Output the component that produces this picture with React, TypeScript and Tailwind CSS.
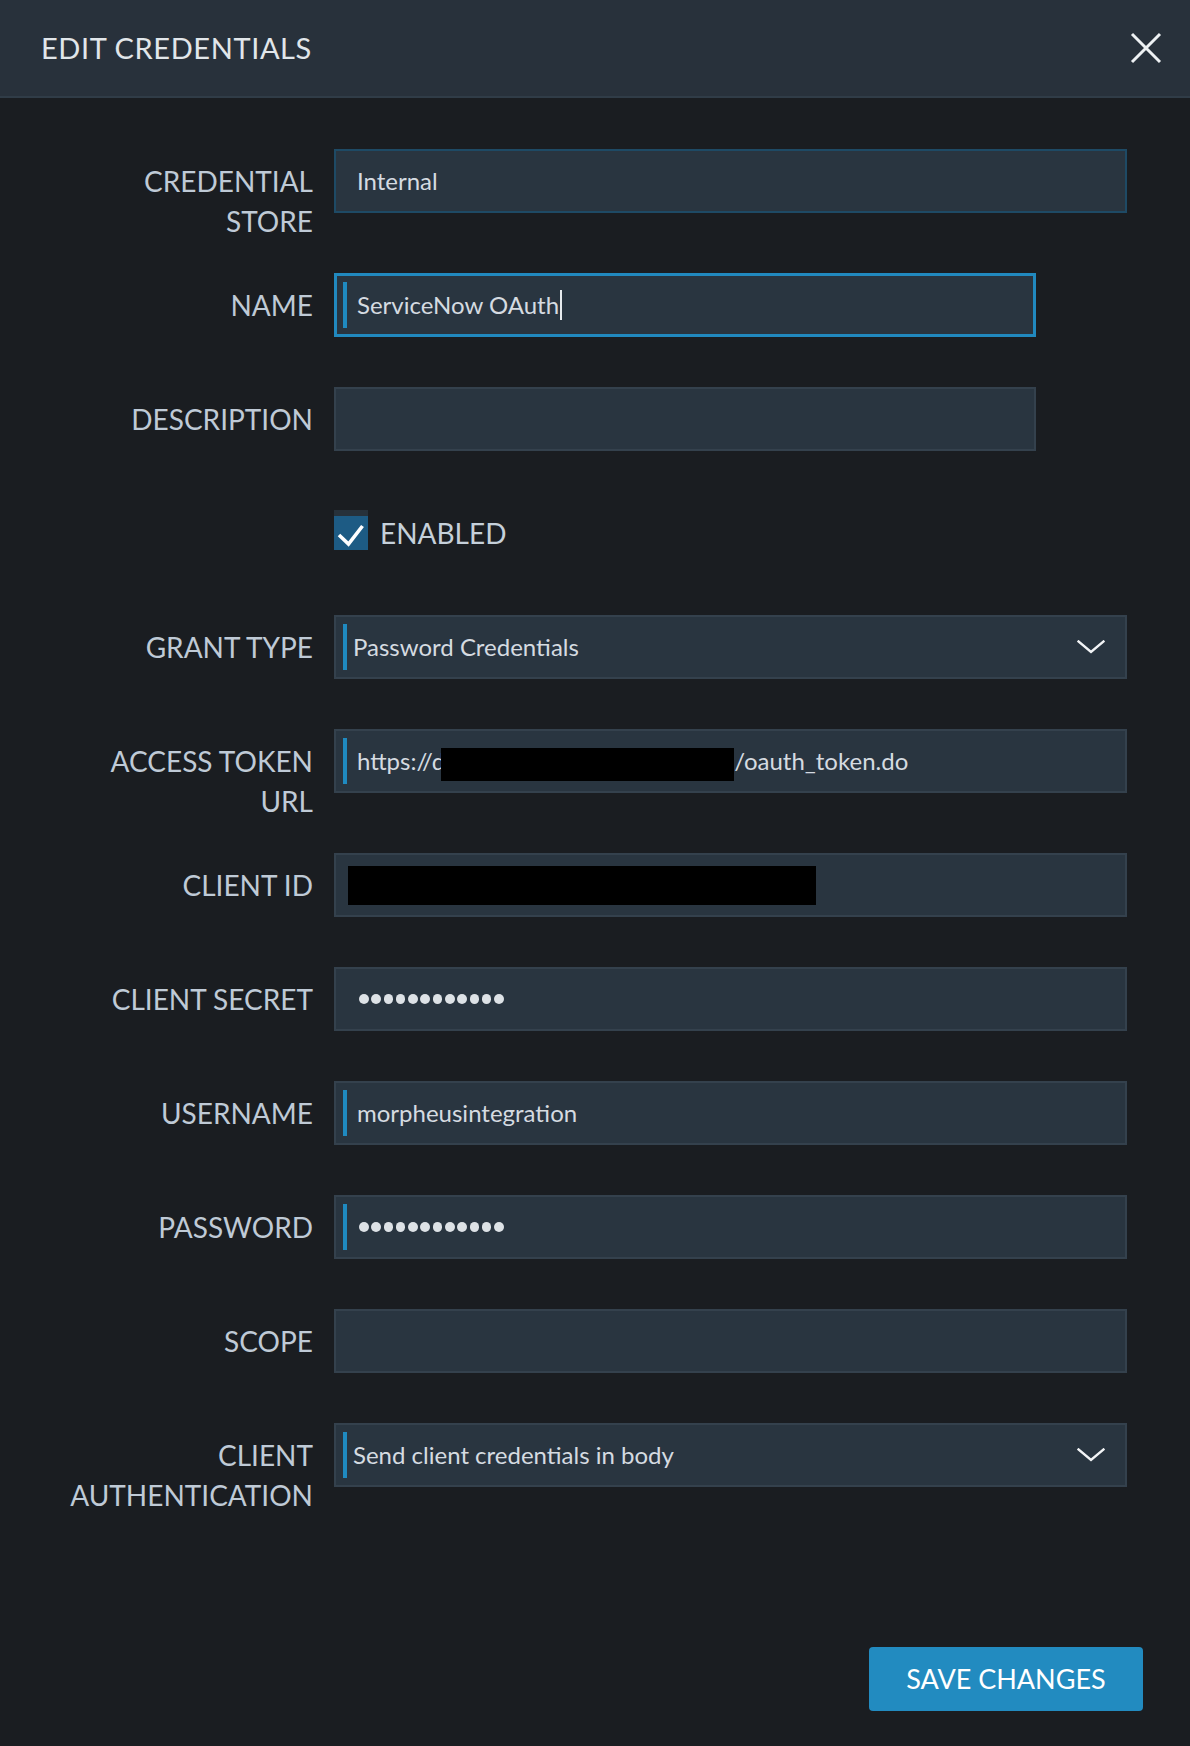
import React from 'react';

type Field = {
  label: string[];
  kind: 'text' | 'select' | 'secret' | 'checkbox';
  value?: string;
  bar?: boolean;
  short?: boolean;
  focused?: boolean;
  readonly?: boolean;
  redact?: 'url' | 'id';
};

const fields: Field[] = [
  { label: ['CREDENTIAL', 'STORE'], kind: 'text', value: 'Internal', readonly: true },
  { label: ['NAME'], kind: 'text', value: 'ServiceNow OAuth', bar: true, short: true, focused: true },
  { label: ['DESCRIPTION'], kind: 'text', value: '', short: true },
  { label: [], kind: 'checkbox', value: 'ENABLED' },
  { label: ['GRANT TYPE'], kind: 'select', value: 'Password Credentials', bar: true },
  { label: ['ACCESS TOKEN', 'URL'], kind: 'text', bar: true, redact: 'url' },
  { label: ['CLIENT ID'], kind: 'text', redact: 'id' },
  { label: ['CLIENT SECRET'], kind: 'secret' },
  { label: ['USERNAME'], kind: 'text', value: 'morpheusintegration', bar: true },
  { label: ['PASSWORD'], kind: 'secret', bar: true },
  { label: ['SCOPE'], kind: 'text', value: '' },
  { label: ['CLIENT', 'AUTHENTICATION'], kind: 'select', value: 'Send client credentials in body', bar: true },
];

function Chevron() {
  return (
    <svg width="28" height="14" viewBox="0 0 28 14" fill="none" className="shrink-0">
      <path d="M1.5 1.5 L14 12 L26.5 1.5" stroke="#f2f4f6" strokeWidth="2.4" strokeLinecap="square" />
    </svg>
  );
}

function Dots() {
  return (
    <div className="flex items-center gap-[2.7px]">
      {Array.from({ length: 12 }).map((_, i) => (
        <span key={i} className="block w-[9.6px] h-[9.6px] rounded-full bg-[#dde2e6]" />
      ))}
    </div>
  );
}

function Input({ f }: { f: Field }) {
  const width = f.short ? 'w-[702px]' : 'w-[793px]';
  const border = f.focused
    ? 'border-[3px] border-[#2189bf] p-[6px]'
    : f.readonly
    ? 'border-2 border-[#1e4a65] p-[7px]'
    : 'border-2 border-[#34414d] p-[7px]';
  return (
    <div className={`${width} h-[64px] flex items-stretch bg-[#293540] ${border}`}>
      <span className={`block w-[4px] shrink-0 ${f.bar ? 'bg-[#1f8ac0]' : ''}`} />
      {f.kind === 'select' ? (
        <div className="flex flex-1 items-center justify-between pl-[6px] pr-[13px]">
          <span className="text-[24px] text-[#d5dbe1]">{f.value}</span>
          <Chevron />
        </div>
      ) : f.kind === 'secret' ? (
        <div className="flex flex-1 items-center pl-[12px]">
          <Dots />
        </div>
      ) : f.redact === 'url' ? (
        <div className="flex flex-1 items-center pl-[10px] text-[24px] text-[#d5dbe1]">
          <span>https://d</span>
          <span className="block w-[293px] h-[33px] bg-black -ml-[4px] mt-[6px]" />
          <span>/oauth_token.do</span>
        </div>
      ) : f.redact === 'id' ? (
        <div className="flex flex-1 items-center pl-[1px]">
          <span className="block w-[468px] h-[39px] bg-black" />
        </div>
      ) : (
        <div className="flex flex-1 items-center pl-[10px] text-[24px] text-[#d5dbe1]">
          <span>{f.value}</span>
          {f.focused && <span className="block w-[2px] h-[30px] bg-[#e6eaed] ml-[1px]" />}
        </div>
      )}
    </div>
  );
}

export default function App() {
  return (
    <div
      className="min-h-screen w-full bg-[#1a1d21] flex flex-col"
      style={{ fontFamily: 'Lato, "Noto Sans", sans-serif' }}
    >
      <div className="h-[98px] shrink-0 flex items-center justify-between pl-[41px] pr-[28px] bg-[#28313b] border-b-2 border-[#303c47]">
        <h1 className="text-[29px] text-[#e1e6ea] font-normal tracking-[0.6px]">EDIT CREDENTIALS</h1>
        <svg width="32" height="32" viewBox="0 0 32 32" fill="none">
          <path d="M2 2 L30 30 M30 2 L2 30" stroke="#eef1f3" strokeWidth="3" />
        </svg>
      </div>

      <div className="flex flex-col pt-[51px]">
        {fields.map((f, i) => {
          const twoLine = f.label.length > 1;
          return (
            <div key={i} className={`flex items-start ${twoLine ? 'h-[74px]' : 'h-[64px]'} mb-[50px]`}>
              <div className="w-[313px] shrink-0 text-right pt-[12px] text-[28px] leading-[40px] text-[#bfcad6]">
                {f.label.map((l) => (
                  <div key={l}>{l}</div>
                ))}
              </div>
              <div className="ml-[21px]">
                {f.kind === 'checkbox' ? (
                  <div className="flex items-center gap-[12px] pt-[9px]">
                    <div className="w-[34px] h-[40px] bg-[#1d5b84] border-t-[6px] border-[#27313a]">
                      <svg width="34" height="34" viewBox="0 0 34 34" fill="none">
                        <path d="M5 19 L14.5 28 L28.5 10" stroke="#ffffff" strokeWidth="3.6" />
                      </svg>
                    </div>
                    <span className="text-[28px] text-[#c5d0da] leading-none pt-[6px]">{f.value}</span>
                  </div>
                ) : (
                  <Input f={f} />
                )}
              </div>
            </div>
          );
        })}

        <div className="flex justify-end pr-[47px] mt-[100px] pb-[35px]">
          <button className="w-[274px] h-[64px] rounded-[4px] bg-[#228bc0] text-white text-[27px]">
            SAVE CHANGES
          </button>
        </div>
      </div>
    </div>
  );
}
